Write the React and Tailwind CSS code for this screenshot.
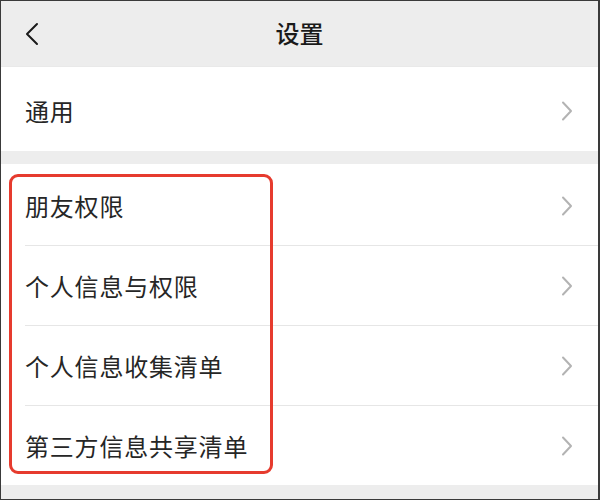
import React from 'react';

const font = { fontFamily: '"Noto Sans CJK SC", "Noto Sans", sans-serif' };

function Chevron() {
    return (
        <svg width="12" height="20" viewBox="0 0 12 20" fill="none" className="shrink-0">
            <path d="M2 1.5 L10 10 L2 18.5" stroke="#b3b3b3" strokeWidth="2" strokeLinecap="round" strokeLinejoin="round" />
        </svg>
    );
}

function Row({ label, first, className = 'h-[80px]' }) {
    return (
        <div className={`pl-6 bg-white ${className}`}>
            <div className={`h-full flex items-center justify-between pr-[25px] ${first ? '' : 'border-t border-[#e6e6e6]'}`}>
                <span className="text-[24px] tracking-[0.8px] text-[#262626] leading-none">{label}</span>
                <Chevron />
            </div>
        </div>
    );
}

export default function App() {
    const items = ['朋友权限', '个人信息与权限', '个人信息收集清单', '第三方信息共享清单'];

    return (
        <div style={font} className="relative w-[600px] h-[500px] overflow-hidden bg-[#ededed] border-t border-l border-b border-r-2 border-[#3a3a3a]">
            <div className="h-[65px] flex items-center relative">
                <svg width="16" height="24" viewBox="0 0 16 24" fill="none" className="absolute left-[23px] top-[21px]">
                    <path d="M13 2 L3 12 L13 22" stroke="#1a1a1a" strokeWidth="2" strokeLinecap="round" strokeLinejoin="round" />
                </svg>
                <h1 className="w-full text-center text-[24px] font-medium text-[#1a1a1a] leading-none pb-[2px]">设置</h1>
            </div>

            <div className="bg-white h-[85px] pt-[4px] border-t border-[#e9e9e9]">
                <Row label="通用" first className="h-full" />
            </div>

            <div className="h-[13px]" />

            <div className="bg-white">
                {items.map((label, i) => (
                    <Row key={label} label={label} first={i === 0} className={i === 0 ? 'h-[81px] pt-[2px]' : 'h-[80px]'} />
                ))}
            </div>

            <div className="absolute left-[8px] top-[173px] w-[264px] h-[300px] border-[3px] border-[#e63b2e] rounded-[9px] pointer-events-none" />
        </div>
    );
}
